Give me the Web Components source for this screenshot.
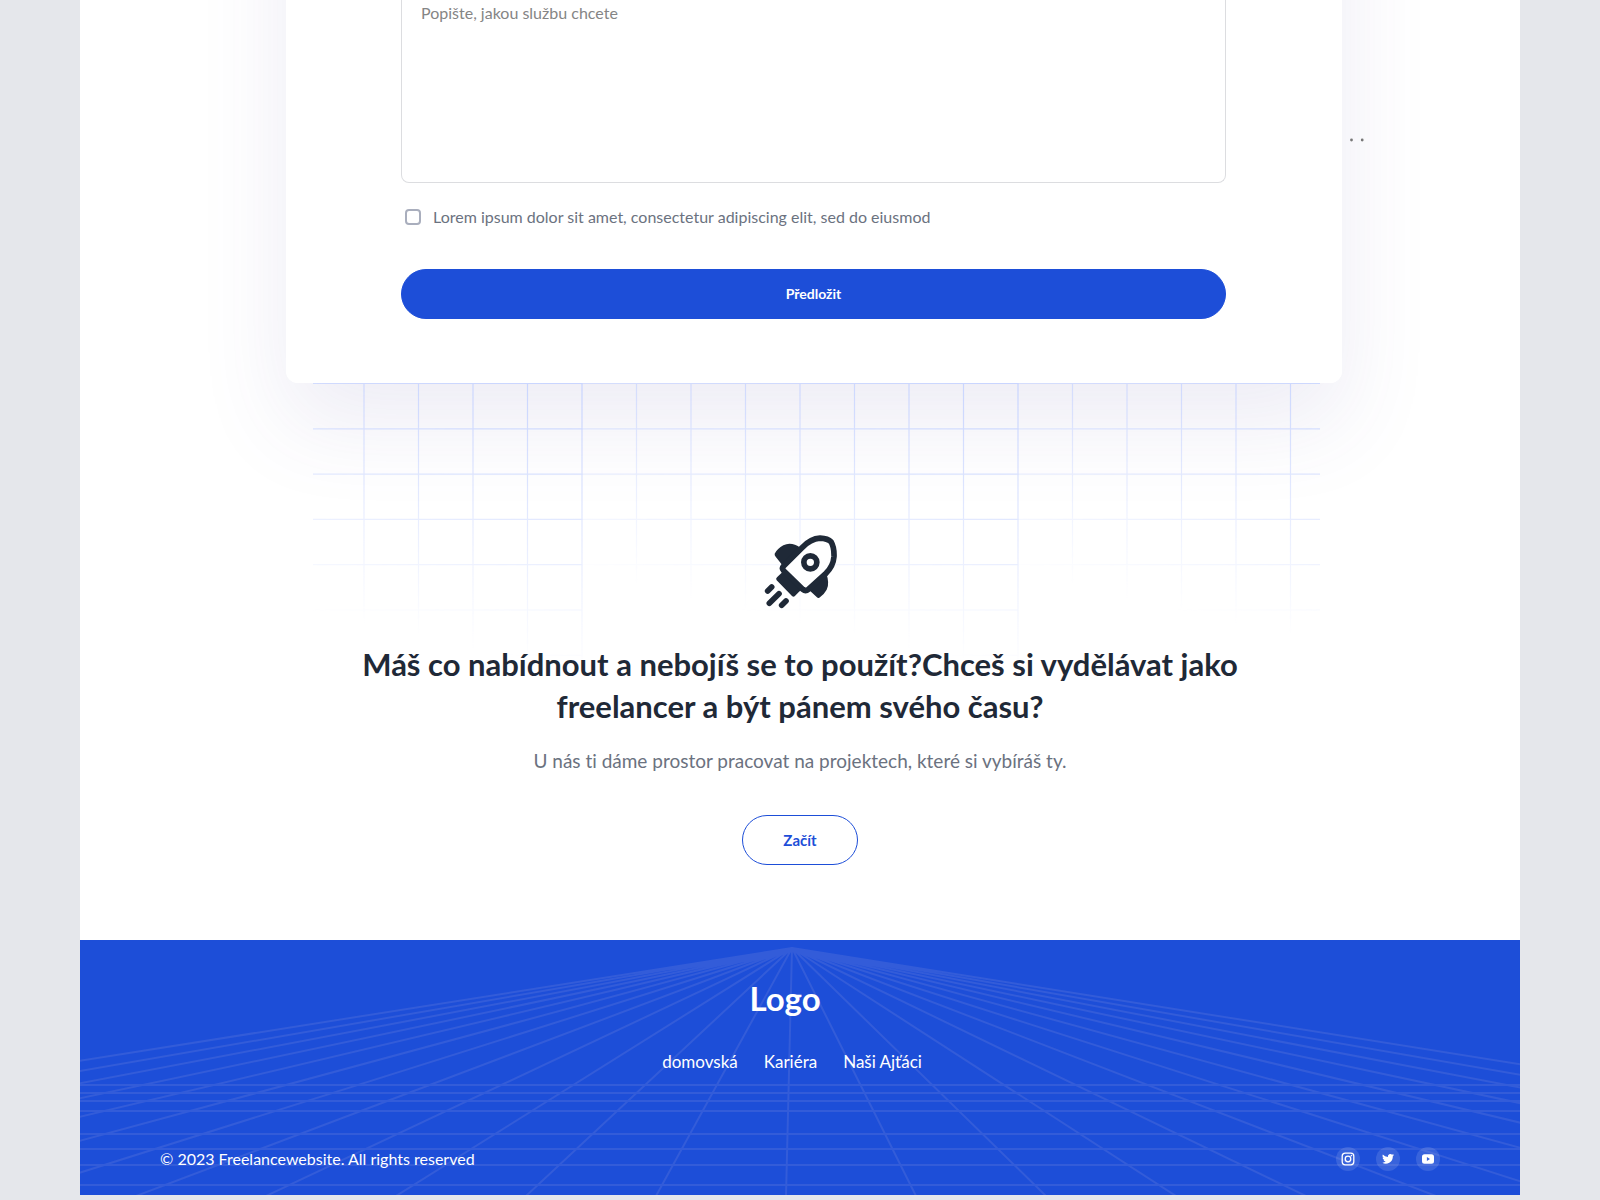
<!DOCTYPE html>
<html lang="cs">
<head>
<meta charset="utf-8">
<meta name="viewport" content="width=device-width, initial-scale=1">
<title>Freelancewebsite</title>
<style>
html { background: #e5e7eb; }
body { margin: 0; padding: 0 5%; font-family: Lato, "Open Sans", sans-serif; font-variant-ligatures: none; color: #1f2937; }
</style>
</head>
<body>
<page-shell>
  <order-card>
    <text-field label="Popis služby" placeholder="Popište, jakou službu chcete"></text-field>
    <check-field>Lorem ipsum dolor sit amet, consectetur adipiscing elit, sed do eiusmod</check-field>
    <pill-button wide>Předložit</pill-button>
  </order-card>
  <join-banner>
    <span slot="title">Máš co nabídnout a nebojíš se to použít?Chceš si vydělávat jako freelancer a být pánem svého času?</span>
    <span slot="lead">U nás ti dáme prostor pracovat na projektech, které si vybíráš ty.</span>
    <pill-button slot="action" outline>Začít</pill-button>
  </join-banner>
  <site-footer>
    <span slot="logo">Logo</span>
    <nav-link slot="nav">domovská</nav-link>
    <nav-link slot="nav">Kariéra</nav-link>
    <nav-link slot="nav">Naši Ajťáci</nav-link>
    <span slot="copy">© 2023 Freelancewebsite. All rights reserved</span>
    <social-link slot="social" kind="instagram"></social-link>
    <social-link slot="social" kind="twitter"></social-link>
    <social-link slot="social" kind="youtube"></social-link>
  </site-footer>
</page-shell>
<script>
const define = (name, render) => customElements.define(name, class extends HTMLElement {
  constructor() {
    super();
    this.attachShadow({ mode: 'open' });
  }
  connectedCallback() {
    const t = document.createElement('template');
    t.innerHTML = render(this);
    this.shadowRoot.replaceChildren(t.content.cloneNode(true));
  }
});

define('page-shell', () => `
<style>
:host { display: flex; flex-direction: column; background: #fff; overflow: hidden; }
</style>
<slot></slot>`);

define('order-card', () => `
<style>
:host { display: block; position: relative; isolation: isolate; margin: 0 178px 0 206px; }
:host::before { content: ""; position: absolute; z-index: -1; inset: -300px 0 0; border-radius: 12px;
  box-shadow: 0 40px 90px rgba(75, 65, 155, .1); }
form { display: flex; flex-direction: column; padding: 0 116px 64px 115px; background: #fff;
  border-radius: 0 0 12px 12px; }
.dots { position: absolute; left: 100%; top: 138px; margin-left: 8px; fill: #777; }
</style>
<form><slot></slot></form>
<svg class="dots" width="16" height="4" aria-hidden="true"><circle cx="1.5" cy="2" r="1.4"/><circle cx="12.2" cy="2" r="1.4"/></svg>`);

define('text-field', el => `
<style>
:host { display: flex; }
textarea { flex: 1; box-sizing: border-box; height: 183px; padding: 3px 19px; resize: none; outline: 0;
  border: 1px solid #dcdde0; border-top: 0; border-radius: 0 0 8px 8px; background: #fff;
  font: 16px/20px Lato, sans-serif; color: #1f2937; }
textarea::placeholder { color: #858585; opacity: 1; }
</style>
<textarea aria-label="${el.getAttribute('label')}" placeholder="${el.getAttribute('placeholder')}"></textarea>`);

define('check-field', () => `
<style>
:host { display: block; padding: 22px 4px 40px; }
label { display: flex; align-items: center; gap: 12px; font-size: 16px; line-height: 24px; color: #6b7280; }
input { appearance: none; box-sizing: border-box; width: 16px; height: 16px; margin: 0;
  border: 2px solid #a9aebd; border-radius: 4px; background: #fff; }
input:checked { background: #1d4ed8; border-color: #1d4ed8; }
</style>
<label><input type="checkbox"><slot></slot></label>`);

define('pill-button', () => `
<style>
:host { display: inline-flex; }
button { flex: 1; height: 50px; padding: 0 40px; border: 1px solid #1d4ed8; border-radius: 25px;
  font: 700 14px/20px Lato, sans-serif; background: #1d4ed8; color: #fff; cursor: pointer; }
:host([outline]) button { background: #fff; color: #1d4ed8; font-size: 15px; }
</style>
<button type="button"><slot></slot></button>`);

/* One tile of the backdrop grid: 8 columns by 6 rows, faded by the shared mask. */
const gridTile = x => {
  let d = '';
  for (let i = 1; i <= 8; i++) d += `M${i * 54.5} 0V290`;
  for (let j = 0; j <= 6; j++) d += `M0 ${0.5 + j * 45.3}H436.5`;
  return `<g transform="translate(${x} 0)"><path d="${d}" mask="url(#fade)"/></g>`;
};

define('join-banner', () => `
<style>
:host { display: flex; flex-direction: column; align-items: center; position: relative;
  padding: 151px 206px 75px; text-align: center; }
.grid { position: absolute; top: 0; left: 233px; right: 200px; height: 290px; overflow: hidden; }
.grid svg { display: block; }
.rocket, h2, p, ::slotted([slot=action]) { position: relative; }
h2 { max-width: 900px; margin: 34px 0 0; font-size: 31px; line-height: 42px; font-weight: 700; }
p { margin: 20px 0 40px; font-size: 19px; line-height: 28px; color: #6b7280; }
</style>
<div class="grid" aria-hidden="true">
  <svg width="1007" height="290" fill="none" stroke="#c6d3ff" stroke-width="1.2">
    <defs>
      <linearGradient id="g" gradientUnits="userSpaceOnUse" x1="436" y1="0" x2="373" y2="276">
        <stop offset="0" stop-color="#fff" stop-opacity=".95"/><stop offset=".5" stop-color="#fff" stop-opacity=".5"/><stop offset="1" stop-color="#fff" stop-opacity="0"/>
      </linearGradient>
      <mask id="fade" maskUnits="userSpaceOnUse" x="-2" y="-2" width="440" height="294"><rect x="-2" y="-2" width="440" height="294" fill="url(#g)"/></mask>
    </defs>
    ${[-167, 269, 705].map(gridTile).join('')}
  </svg>
</div>
<svg class="rocket" width="74" height="75" viewBox="69 40 222 225" fill="#1f2937" aria-hidden="true">
  <path d="M182 82Q154 62 130 74 112 84 104 99 103 104 107 108L126 132z"/>
  <path d="M258 156Q270 188 260 207 252 222 238 231 234 233 230 229L204 205z"/>
  <path d="M110 179Q106 174 111 170L130 152 186 206Q178 212 164 227 160 230 156 226z"/>
  <path d="M131 136 186 81Q212 54 240 52.500 264 54 273 63 283 80 282 108 280 136 258 158L205 206Q197 213 188 206L131 150Q124 143 131 136z" fill="#fff" stroke="#1f2937" stroke-width="17" stroke-linejoin="round"/>
  <circle cx="211" cy="125" r="19.500" fill="#fff" stroke="#1f2937" stroke-width="17"/>
  <path d="M83 211 95 199M88 248 117 219M125 254 138 241" stroke="#1f2937" stroke-width="17" stroke-linecap="round"/>
</svg>
<h2><slot name="title"></slot></h2>
<p><slot name="lead"></slot></p>
<slot name="action"></slot>`);

define('nav-link', () => `
<style>
:host { display: block; }
a { color: #fff; text-decoration: none; font-size: 17px; line-height: 24px; }
</style>
<a href="#"><slot></slot></a>`);

const socialIcons = {
  instagram: ['Instagram', '<g fill="none" stroke="#fff" stroke-width="1.300"><rect x="6.200" y="6.200" width="11.600" height="11.600" rx="3"/><circle cx="12" cy="12" r="2.800"/></g><circle cx="15.400" cy="8.600" r=".8"/>'],
  twitter: ['Twitter', '<path d="M18 8.100a4.800 4.800 0 0 1-1.400.4 2.500 2.500 0 0 0 1.100-1.400 4.900 4.900 0 0 1-1.600.6 2.500 2.500 0 0 0-4.200 2.300A7 7 0 0 1 6.800 7.400a2.500 2.500 0 0 0 .8 3.300 2.500 2.500 0 0 1-1.100-.3 2.500 2.500 0 0 0 2 2.400 2.500 2.500 0 0 1-1.100 0 2.500 2.500 0 0 0 2.300 1.700A5 5 0 0 1 6 15.600a7 7 0 0 0 10.800-6.300A5 5 0 0 0 18 8.100z"/>'],
  youtube: ['YouTube', '<path fill-rule="evenodd" d="M8.500 7.200h7q2.500 0 2.500 2.500v4.600q0 2.500-2.500 2.500h-7Q6 16.800 6 14.300V9.700q0-2.500 2.500-2.500zM10.900 10.100v3.800l3.100-1.900z"/>']
};

define('social-link', el => {
  const [name, shape] = socialIcons[el.getAttribute('kind')];
  return `
<style>
:host { display: block; }
a { display: block; width: 24px; height: 24px; border-radius: 50%; background: rgba(255, 255, 255, .12); }
svg { display: block; fill: #fff; }
</style>
<a href="#" aria-label="${name}"><svg width="24" height="24" viewBox="0 0 24 24">${shape}</svg></a>`;
});

/* Perspective floor: rays from one vanishing point, crossed by horizontal lines. */
const floorLines = () => {
  let d = '';
  for (let k = -12; k <= 12; k++) d += `M712 8L${706 + 130 * k} 256`;
  for (const y of [145, 153, 161, 171, 194, 209, 225, 245]) d += `M-400 ${y}H1840`;
  return d;
};

define('site-footer', () => `
<style>
:host { display: block; position: relative; overflow: hidden; background: #1d4ed8; color: #fff; }
.floor { position: absolute; inset: 0; display: flex; justify-content: center; }
.floor svg { flex: none; overflow: visible; }
footer { position: relative; display: flex; flex-direction: column; padding: 37px 80px 24px; }
.brand { align-self: center; padding-right: 30px; font-size: 33px; line-height: 42px; font-weight: 700; }
nav { align-self: center; display: flex; gap: 26px; padding: 31px 16px 73px 0; }
.bottom { display: flex; align-items: center; justify-content: space-between; font-size: 16px; line-height: 24px; }
.social { display: flex; gap: 16px; }
</style>
<div class="floor" aria-hidden="true"><svg width="1440" height="256" fill="none" stroke="#335cd9" stroke-width="2"><path d="${floorLines()}"/></svg></div>
<footer>
  <div class="brand"><slot name="logo"></slot></div>
  <nav><slot name="nav"></slot></nav>
  <div class="bottom"><span><slot name="copy"></slot></span><div class="social"><slot name="social"></slot></div></div>
</footer>`);
</script>
</body>
</html>
